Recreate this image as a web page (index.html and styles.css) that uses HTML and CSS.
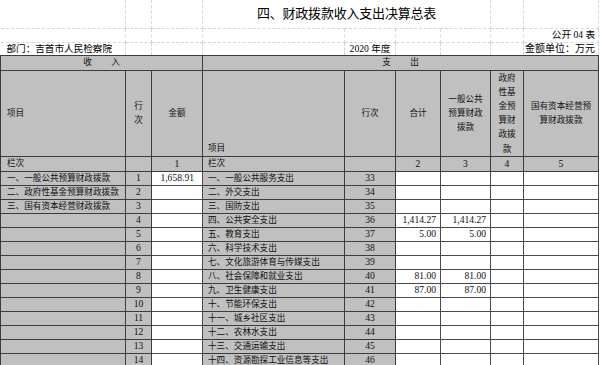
FILE: index.html
```html
<!DOCTYPE html>
<html lang="zh-CN">
<head>
<meta charset="utf-8">
<title>四、财政拨款收入支出决算总表</title>
<link rel="stylesheet" href="styles.css">
</head>
<body>
<table class="sheet">
  <colgroup>
    <col class="c1"><col class="c2"><col class="c3"><col class="c4"><col class="c5"><col class="c6"><col class="c7"><col class="c8"><col class="c9">
  </colgroup>
  <tbody>
    <tr class="r-title">
      <td class="grid"></td><td class="grid"></td><td class="grid"></td>
      <td class="grid title" colspan="4">四、财政拨款收入支出决算总表</td>
      <td class="grid"></td><td class="grid"></td>
    </tr>
    <tr class="r-sub">
      <td class="grid"></td><td class="grid"></td><td class="grid"></td><td class="grid"></td><td class="grid"></td><td class="grid"></td><td class="grid"></td><td class="grid"></td>
      <td class="grid meta right">公开 04 表</td>
    </tr>
    <tr class="r-sub2">
      <td class="grid meta left">部门：吉首市人民检察院</td><td class="grid"></td><td class="grid"></td><td class="grid"></td>
      <td class="grid meta center">2020 年度</td><td class="grid"></td><td class="grid"></td><td class="grid"></td>
      <td class="grid meta right unit">金额单位：万元</td>
    </tr>
    <tr class="r-group">
      <td class="g center" colspan="3"><span class="pre">收         入</span></td>
      <td class="g center" colspan="6"><span class="pre">支         出</span></td>
    </tr>
    <tr class="r-head">
      <td class="g left">项目</td>
      <td class="g center wrap">行<br>次</td>
      <td class="g center">金额</td>
      <td class="g left bottom">项目</td>
      <td class="g center">行次</td>
      <td class="g center">合计</td>
      <td class="g center wrap">一般公共<br>预算财政<br>拨款</td>
      <td class="g center wrap">政府<br>性基<br>金预<br>算财<br>政拨<br>款</td>
      <td class="g center wrap">国有资本经营预<br>算财政拨款</td>
    </tr>
    <tr class="r-idx">
      <td class="g left">栏次</td>
      <td class="g"></td>
      <td class="g center n">1</td>
      <td class="g left">栏次</td>
      <td class="g"></td>
      <td class="g center n">2</td>
      <td class="g center n">3</td>
      <td class="g center n">4</td>
      <td class="g center n">5</td>
    </tr>
    <tr class="r-data">
      <td class="g left">一、一般公共预算财政拨款</td><td class="g center n">1</td><td class="w right n pad8">1,658.91</td>
      <td class="g left">一、一般公共服务支出</td><td class="g center n">33</td><td class="w"></td><td class="w"></td><td class="w"></td><td class="w"></td>
    </tr>
    <tr class="r-data">
      <td class="g left">二、政府性基金预算财政拨款</td><td class="g center n">2</td><td class="w"></td>
      <td class="g left">二、外交支出</td><td class="g center n">34</td><td class="w"></td><td class="w"></td><td class="w"></td><td class="w"></td>
    </tr>
    <tr class="r-data">
      <td class="g left">三、国有资本经营财政拨款</td><td class="g center n">3</td><td class="w"></td>
      <td class="g left">三、国防支出</td><td class="g center n">35</td><td class="w"></td><td class="w"></td><td class="w"></td><td class="w"></td>
    </tr>
    <tr class="r-data">
      <td class="g"></td><td class="g center n">4</td><td class="w"></td>
      <td class="g left">四、公共安全支出</td><td class="g center n">36</td><td class="w right n">1,414.27</td><td class="w right n">1,414.27</td><td class="w"></td><td class="w"></td>
    </tr>
    <tr class="r-data">
      <td class="g"></td><td class="g center n">5</td><td class="w"></td>
      <td class="g left">五、教育支出</td><td class="g center n">37</td><td class="w right n">5.00</td><td class="w right n">5.00</td><td class="w"></td><td class="w"></td>
    </tr>
    <tr class="r-data">
      <td class="g"></td><td class="g center n">6</td><td class="w"></td>
      <td class="g left">六、科学技术支出</td><td class="g center n">38</td><td class="w"></td><td class="w"></td><td class="w"></td><td class="w"></td>
    </tr>
    <tr class="r-data">
      <td class="g"></td><td class="g center n">7</td><td class="w"></td>
      <td class="g left">七、文化旅游体育与传媒支出</td><td class="g center n">39</td><td class="w"></td><td class="w"></td><td class="w"></td><td class="w"></td>
    </tr>
    <tr class="r-data">
      <td class="g"></td><td class="g center n">8</td><td class="w"></td>
      <td class="g left">八、社会保障和就业支出</td><td class="g center n">40</td><td class="w right n">81.00</td><td class="w right n">81.00</td><td class="w"></td><td class="w"></td>
    </tr>
    <tr class="r-data">
      <td class="g"></td><td class="g center n">9</td><td class="w"></td>
      <td class="g left">九、卫生健康支出</td><td class="g center n">41</td><td class="w right n">87.00</td><td class="w right n">87.00</td><td class="w"></td><td class="w"></td>
    </tr>
    <tr class="r-data">
      <td class="g"></td><td class="g center n">10</td><td class="w"></td>
      <td class="g left">十、节能环保支出</td><td class="g center n">42</td><td class="w"></td><td class="w"></td><td class="w"></td><td class="w"></td>
    </tr>
    <tr class="r-data">
      <td class="g"></td><td class="g center n">11</td><td class="w"></td>
      <td class="g left">十一、城乡社区支出</td><td class="g center n">43</td><td class="w"></td><td class="w"></td><td class="w"></td><td class="w"></td>
    </tr>
    <tr class="r-data">
      <td class="g"></td><td class="g center n">12</td><td class="w"></td>
      <td class="g left">十二、农林水支出</td><td class="g center n">44</td><td class="w"></td><td class="w"></td><td class="w"></td><td class="w"></td>
    </tr>
    <tr class="r-data">
      <td class="g"></td><td class="g center n">13</td><td class="w"></td>
      <td class="g left">十三、交通运输支出</td><td class="g center n">45</td><td class="w"></td><td class="w"></td><td class="w"></td><td class="w"></td>
    </tr>
    <tr class="r-data">
      <td class="g"></td><td class="g center n">14</td><td class="w"></td>
      <td class="g left">十四、资源勘探工业信息等支出</td><td class="g center n">46</td><td class="w"></td><td class="w"></td><td class="w"></td><td class="w"></td>
    </tr>
  </tbody>
</table>
</body>
</html>
```

FILE: styles.css
```css
* {
  box-sizing: border-box;
}

html, body {
  margin: 0;
  padding: 0;
  background: #ffffff;
}

body {
  width: 600px;
  height: 365px;
  overflow: hidden;
  font-family: "Liberation Serif", "Noto Sans CJK SC", serif;
  font-size: 8.6px;
  color: #111111;
}

.sheet {
  border-collapse: collapse;
  table-layout: fixed;
  width: 598px;
}

.c1 { width: 125px; }
.c2 { width: 26px; }
.c3 { width: 51px; }
.c4 { width: 142px; }
.c5 { width: 51px; }
.c6 { width: 45px; }
.c7 { width: 50px; }
.c8 { width: 33px; }
.c9 { width: 75px; }

.sheet td {
  padding: 0;
  line-height: 1;
  white-space: nowrap;
  overflow: hidden;
  vertical-align: middle;
}

/* light spreadsheet gridlines above the report */
.grid {
  border-right: 1px dashed #d6d6d6;
  border-bottom: 1px dashed #d6d6d6;
  background: #ffffff;
}

.r-title td { height: 28px; }
.r-sub td { height: 14px; }
.r-sub2 td { height: 13px; }
.r-group td { height: 15px; }
.r-head td { height: 82px; }
.r-idx td { height: 15px; }
.r-data td { height: 14px; }

.title {
  text-align: center;
  font-size: 13px;
  color: #000000;
  letter-spacing: -0.2px;
}

.meta {
  font-size: 9.6px;
  color: #000000;
}

.unit {
  font-size: 10px;
}

/* report cells */
.g {
  background: #c0c0c0;
  border: 1px solid #3c3c3c;
}

.w {
  background: #ffffff;
  border: 1px solid #4a4a4a;
}

.left {
  text-align: left;
  padding-left: 6px !important;
}

.r-data .g.left,
.r-idx .g.left,
.r-head .g.left {
  padding-left: 5px !important;
}

.r-data td:first-child.left,
.r-idx td:first-child.left,
.r-head td:first-child.left {
  padding-left: 6px !important;
}

.center {
  text-align: center;
}

.right {
  text-align: right;
  padding-right: 4px !important;
}

.meta.right {
  padding-right: 3px !important;
}

.pad8 {
  padding-right: 8px !important;
}

.bottom {
  vertical-align: bottom !important;
  padding-bottom: 3px !important;
}

.wrap {
  white-space: normal !important;
  line-height: 14.2px !important;
}

.pre {
  white-space: pre;
}

.n {
  font-size: 9.6px;
}
```
